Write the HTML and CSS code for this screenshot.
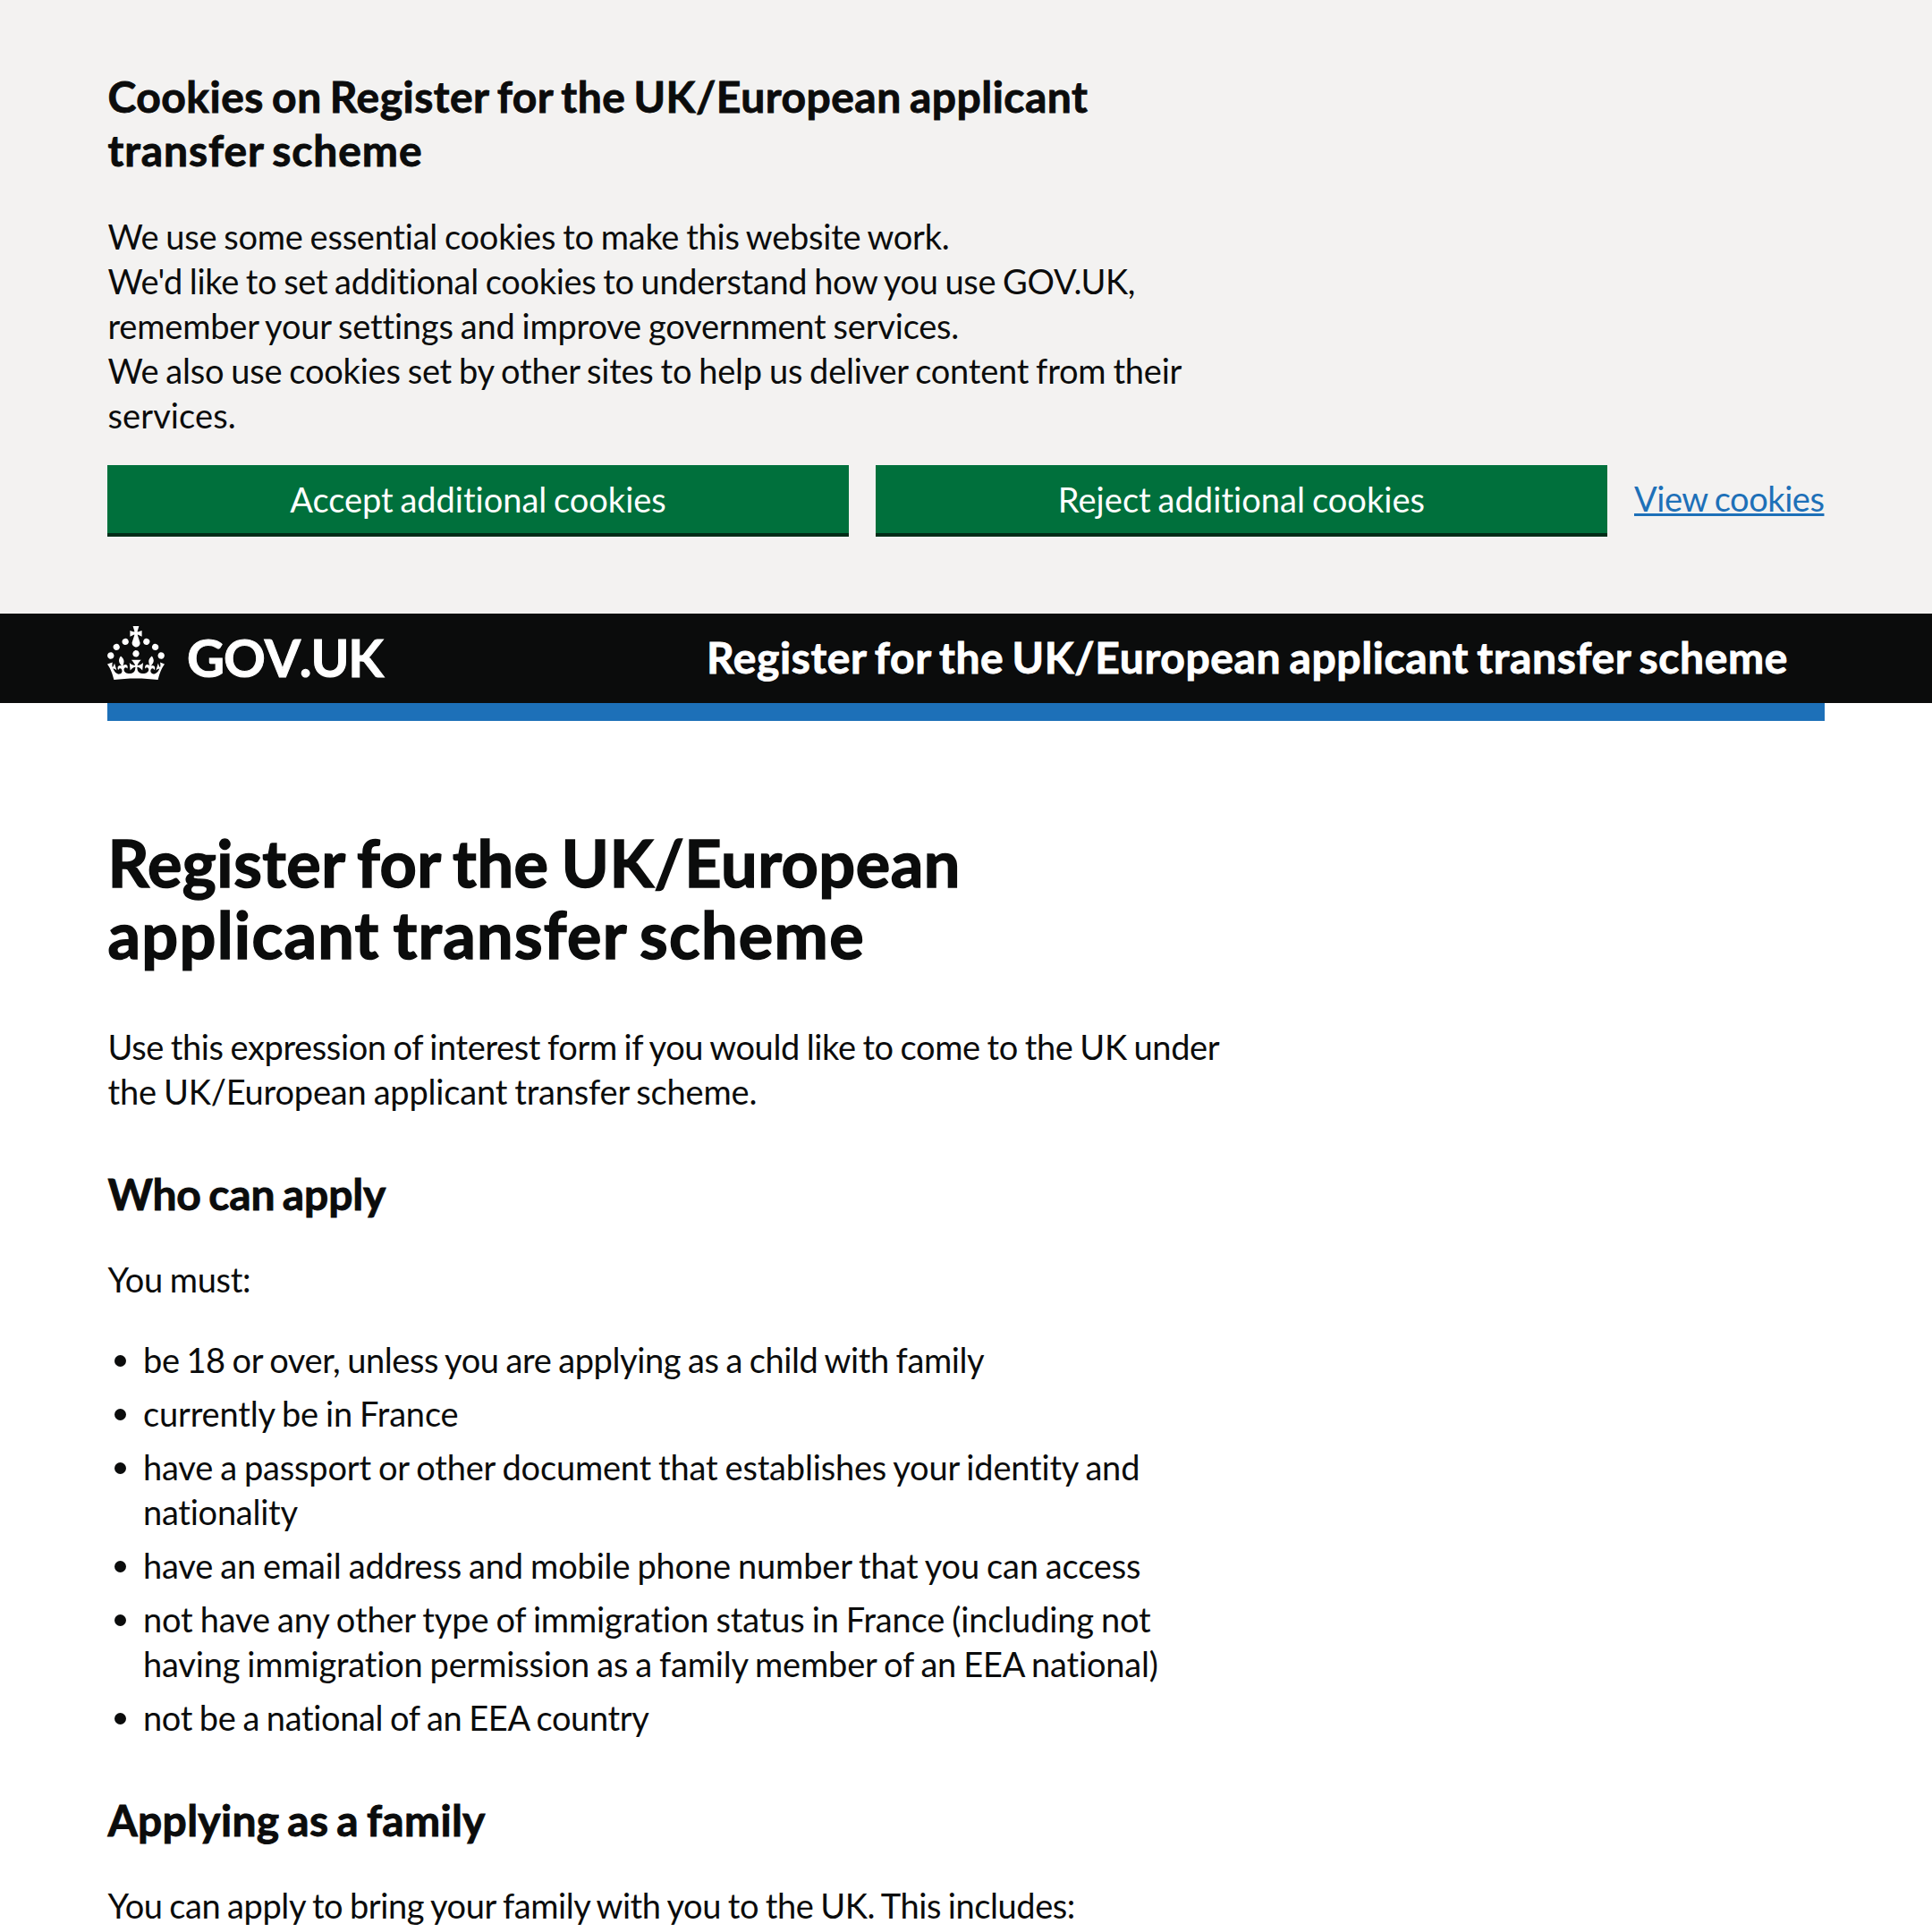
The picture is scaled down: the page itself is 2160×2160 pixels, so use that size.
FILE: index.html
```html
<!DOCTYPE html>
<html lang="en">
<head>
<meta charset="utf-8">
<title>Register for the UK/European applicant transfer scheme - GOV.UK</title>
<link rel="stylesheet" href="styles.css">
</head>
<body>
<section class="cookie-banner" aria-label="Cookies">
  <h2 class="heading-m"><span class="line ck-h1">Cookies on Register for the UK/European applicant</span><span class="line ck-h2">transfer scheme</span></h2>
  <p class="body-text"><span class="line ck-1">We use some essential cookies to make this website work.</span><span class="line ck-2">We'd like to set additional cookies to understand how you use GOV.UK,</span><span class="line ck-3">remember your settings and improve government services.</span><span class="line ck-4">We also use cookies set by other sites to help us deliver content from their</span><span class="line ck-5">services.</span></p>
  <div class="button-group">
    <button class="button button-accept" type="button">Accept additional cookies</button>
    <button class="button button-reject" type="button">Reject additional cookies</button>
    <a class="link" href="#">View cookies</a>
  </div>
</section>
<header class="header">
  <div class="header-logo">
    <svg class="crown" viewBox="0 0 32 30" aria-hidden="true"><path fill="currentColor" fill-rule="evenodd" d="M22.6 10.4c-1 .4-2-.1-2.4-1-.4-.9.1-2 1-2.4.9-.4 2 .1 2.4 1s-.1 2-1 2.4m-5.9 6.7c-.9.4-2-.1-2.4-1-.4-.9.1-2 1-2.4.9-.4 2 .1 2.4 1s-.1 2-1 2.4m10.8-3.7c-1 .4-2-.1-2.4-1-.4-.9.1-2 1-2.4.9-.4 2 .1 2.4 1s0 2-1 2.4m3.3 4.8c-1 .4-2-.1-2.4-1-.4-.9.1-2 1-2.4.9-.4 2 .1 2.4 1s-.1 2-1 2.4M17 4.7l2.3 1.2V2.5l-2.3.7-.2-.2.9-3h-3.4l.9 3-.2.2c-.1.1-2.3-.7-2.3-.7v3.4L15 4.7c.1.1.1.2.2.2l-1.3 4c-.1.2-.1.4-.1.6 0 1.1.8 2 1.9 2.2h.7c1-.2 1.9-1.1 1.9-2.1 0-.2 0-.4-.1-.6l-1.3-4c-.1-.2 0-.2.1-.3m-7.6 5.7c.9.4 2-.1 2.4-1 .4-.9-.1-2-1-2.4-.9-.4-2 .1-2.4 1s0 2 1 2.4m-5 3c.9.4 2-.1 2.4-1 .4-.9-.1-2-1-2.4-.9-.4-2 .1-2.4 1s.1 2 1 2.4m-3.2 4.8c.9.4 2-.1 2.4-1 .4-.9-.1-2-1-2.4-.9-.4-2 .1-2.4 1s0 2 1 2.4m14.8 11c4.4 0 8.6.3 12.3.8 1.1-4.5 2.4-7 3.7-8.8l-2.5-.9c.2 1.3.3 1.9 0 2.7-.4-.4-.8-1.1-1.1-2.3l-1.2 4c.7-.5 1.3-.8 2-.9-1.1 2.5-2.6 3.1-3.5 3-1.1-.2-1.7-1.2-1.5-2.1.3-1.2 1.5-1.5 2.1-.1 1.1-2.3-.8-3-2-2.3 1.9-1.9 2.1-3.5.6-5.6-2.1 1.6-2.1 3.2-1.2 5.5-1.2-1.4-3.2-.6-2.5 1.6.9-1.4 2.1-.5 1.9.8-.2 1.1-1.7 2.1-3.5 1.9-2.7-.2-2.9-2.1-2.9-3.6.7-.1 1.9.5 2.9 1.9l.4-4.3c-1.1 1.1-2.1 1.4-3.2 1.4.4-1.2 2.1-3 2.1-3h-5.4s1.7 1.9 2.1 3c-1.1 0-2.1-.2-3.2-1.4l.4 4.3c1-1.4 2.2-2 2.9-1.9-.1 1.5-.2 3.4-2.9 3.6-1.9.2-3.4-.8-3.5-1.9-.2-1.3 1-2.2 1.9-.8.7-2.3-1.2-3-2.5-1.6.9-2.2.9-3.9-1.2-5.5-1.5 2-1.3 3.7.6 5.6-1.2-.7-3.1 0-2 2.3.6-1.4 1.8-1.1 2.1.1.2.9-.3 1.9-1.5 2.1-.9.2-2.4-.5-3.5-3 .6 0 1.2.3 2 .9l-1.2-4c-.3 1.1-.7 1.9-1.1 2.3-.3-.8-.2-1.4 0-2.7l-2.9.9C1.3 23 2.6 25.5 3.7 30c3.7-.5 7.9-.8 12.3-.8"/></svg>
    <span class="wordmark">GOV.UK</span>
  </div>
  <div class="service-name">Register for the UK/European applicant transfer scheme</div>
</header>
<div class="header-bar"></div>
<main class="main">
  <h1 class="heading-l"><span class="line h1-1">Register for the UK/European</span><span class="line h1-2">applicant transfer scheme</span></h1>
  <p class="body-text"><span class="line in-1">Use this expression of interest form if you would like to come to the UK under</span><span class="line in-2">the UK/European applicant transfer scheme.</span></p>
  <h2 class="heading-m section-heading"><span class="line who">Who can apply</span></h2>
  <p class="body-text"><span class="line must">You must:</span></p>
  <ul class="list">
    <li><span class="line li-1">be 18 or over, unless you are applying as a child with family</span></li>
    <li><span class="line li-2">currently be in France</span></li>
    <li><span class="line li-3">have a passport or other document that establishes your identity and</span><span class="line li-4">nationality</span></li>
    <li><span class="line li-5">have an email address and mobile phone number that you can access</span></li>
    <li><span class="line li-6">not have any other type of immigration status in France (including not</span><span class="line li-7">having immigration permission as a family member of an EEA national)</span></li>
    <li><span class="line li-8">not be a national of an EEA country</span></li>
  </ul>
  <h2 class="heading-m section-heading"><span class="line family">Applying as a family</span></h2>
  <p class="body-text"><span class="line bring">You can apply to bring your family with you to the UK. This includes:</span></p>
</main>
</body>
</html>
```
FILE: styles.css
```css
* { box-sizing: border-box; }

body {
  margin: 0;
  height: 2160px;
  overflow: hidden;
  background: #fff;
  color: #0b0c0c;
  font-family: Lato, "Liberation Sans", sans-serif;
  font-size: 38px;
  line-height: 50px;
  word-spacing: -1.5px;
}

h1, h2, p, ul { margin: 0; padding: 0; }

.line { display: block; padding-left: 0.5px; white-space: nowrap; }

.heading-m {
  font-size: 48px;
  line-height: 60px;
  font-weight: 700;
  word-spacing: -3px;
  -webkit-text-stroke: 0.9px currentColor;
}

.heading-l {
  font-size: 72px;
  line-height: 80px;
  font-weight: 700;
  word-spacing: -4px;
  -webkit-text-stroke: 1.5px currentColor;
}

.body-text { font-size: 38px; line-height: 50px; }

/* Cookie banner */
.cookie-banner {
  height: 686px;
  padding: 78px 120px 0;
  background: #f3f2f1;
}

.cookie-banner .body-text { margin-top: 41px; }

.button-group {
  display: flex;
  align-items: flex-start;
  gap: 30px;
  margin-top: 31px;
}

.button {
  height: 80px;
  padding: 13px 0;
  border: 0;
  border-bottom: 4px solid #002d18;
  background: #00703c;
  color: #fff;
  font: inherit;
  word-spacing: -2px;
  white-space: nowrap;
}

.button-accept { width: 829px; letter-spacing: -0.01px; }
.button-reject { width: 818px; letter-spacing: 0.06px; }

.link {
  width: 213px;
  margin-top: 12px;
  color: #1d70b8;
  letter-spacing: -0.45px;
  text-decoration: underline;
  text-decoration-thickness: 3px;
  text-underline-offset: 2px;
  white-space: nowrap;
}

/* Header */
.header {
  display: flex;
  justify-content: space-between;
  height: 100px;
  padding: 0 161px 0 120px;
  background: #0b0c0c;
  color: #fff;
}

.header-logo { display: flex; gap: 25px; padding-top: 14px; }

.crown { width: 64px; height: 60px; }

.wordmark {
  font-size: 58px;
  line-height: 70px;
  font-weight: 700;
  font-kerning: none;
  letter-spacing: -1.15px;
  -webkit-text-stroke: 1px currentColor;
}

.service-name {
  padding-top: 19px;
  font-size: 48px;
  line-height: 60px;
  font-weight: 700;
  letter-spacing: 0.61px;
  word-spacing: -3px;
  white-space: nowrap;
  -webkit-text-stroke: 0.9px currentColor;
}

.header-bar { height: 20px; margin: 0 120px; background: #1d70b8; }

/* Content */
.main { padding: 118px 120px 0; }
.heading-l + .body-text { margin-top: 61px; }
.section-heading { margin-top: 60px; }
.section-heading + .body-text { margin-top: 40px; }

.list {
  display: grid;
  gap: 10px;
  margin-top: 40px;
  list-style: none;
}

.list li { position: relative; padding-left: 39.5px; }

.list li::before {
  content: "";
  position: absolute;
  left: 8px;
  top: 20px;
  width: 13px;
  height: 13px;
  border-radius: 50%;
  background: #0b0c0c;
}

/* Tracking */
.ck-h1 { letter-spacing: 0.49px; }
.ck-h2 { letter-spacing: 0.9px; }
.ck-1 { letter-spacing: -0.24px; }
.ck-2 { letter-spacing: -0.32px; }
.ck-3 { letter-spacing: -0.2px; }
.ck-4 { letter-spacing: -0.22px; }
.ck-5 { letter-spacing: 0.1px; }
.h1-1 { letter-spacing: 0.5px; }
.h1-2 { letter-spacing: 1.28px; }
.in-1 { letter-spacing: -0.38px; }
.in-2 { letter-spacing: -0.18px; }
.who { letter-spacing: -0.16px; }
.must { letter-spacing: -0.31px; }
.li-1 { letter-spacing: -0.39px; }
.li-2 { letter-spacing: -0.17px; }
.li-3 { letter-spacing: -0.18px; }
.li-4 { letter-spacing: -0.25px; }
.li-5 { letter-spacing: -0.16px; }
.li-6 { letter-spacing: -0.15px; }
.li-7 { letter-spacing: -0.18px; }
.li-8 { letter-spacing: -0.35px; }
.family { letter-spacing: 0.28px; }
.bring { letter-spacing: -0.42px; }
```
